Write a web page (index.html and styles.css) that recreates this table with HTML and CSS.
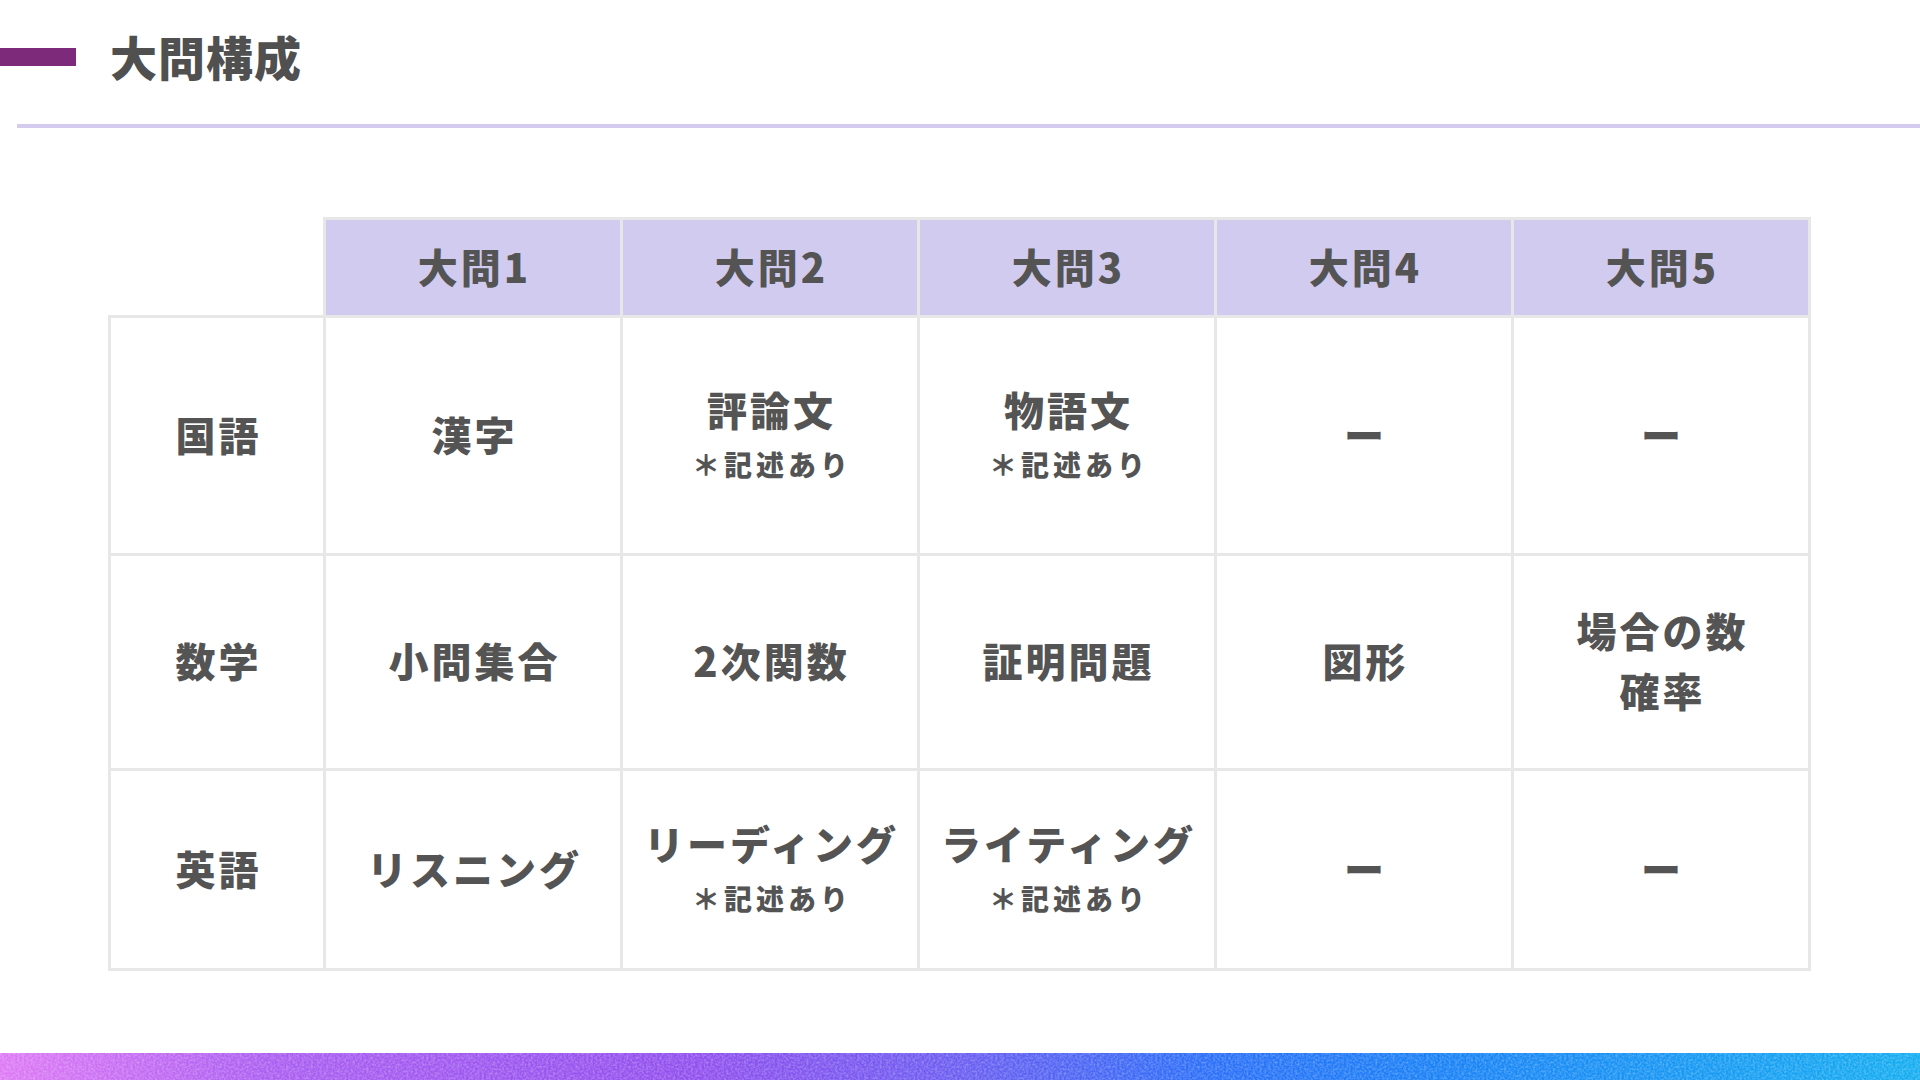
FILE: index.html
```html
<!DOCTYPE html>
<html lang="ja">
<head>
<meta charset="utf-8">
<title>大問構成</title>
<link rel="stylesheet" href="styles.css">
</head>
<body>
<div class="page">
  <header class="head">
    <div class="accent"></div>
    <h1 class="title">大問構成</h1>
  </header>
  <div class="rule"></div>

  <div class="grid">
    <div class="corner"></div>
    <div class="th"><span class="main">大問1</span></div>
    <div class="th"><span class="main">大問2</span></div>
    <div class="th"><span class="main">大問3</span></div>
    <div class="th"><span class="main">大問4</span></div>
    <div class="th"><span class="main">大問5</span></div>

    <div class="cell rh first"><span class="main">国語</span></div>
    <div class="cell first"><span class="main">漢字</span></div>
    <div class="cell first"><span class="main">評論文</span><span class="sub">＊記述あり</span></div>
    <div class="cell first"><span class="main">物語文</span><span class="sub">＊記述あり</span></div>
    <div class="cell first"><span class="main">ー</span></div>
    <div class="cell first"><span class="main">ー</span></div>

    <div class="cell rh"><span class="main">数学</span></div>
    <div class="cell"><span class="main">小問集合</span></div>
    <div class="cell"><span class="main">2次関数</span></div>
    <div class="cell"><span class="main">証明問題</span></div>
    <div class="cell"><span class="main">図形</span></div>
    <div class="cell"><span class="main">場合の数</span><span class="main">確率</span></div>

    <div class="cell rh"><span class="main">英語</span></div>
    <div class="cell"><span class="main">リスニング</span></div>
    <div class="cell"><span class="main">リーディング</span><span class="sub">＊記述あり</span></div>
    <div class="cell"><span class="main">ライティング</span><span class="sub">＊記述あり</span></div>
    <div class="cell"><span class="main">ー</span></div>
    <div class="cell"><span class="main">ー</span></div>
  </div>

  <div class="spacer"></div>
  <div class="band">
    <svg class="band-svg" viewBox="0 0 1920 27" preserveAspectRatio="none" xmlns="http://www.w3.org/2000/svg">
      <defs>
        <linearGradient id="g" x1="0" y1="0" x2="1" y2="0">
          <stop offset="0" stop-color="#de7af5"/>
          <stop offset="0.14" stop-color="#ab5ff1"/>
          <stop offset="0.36" stop-color="#9150ee"/>
          <stop offset="0.5" stop-color="#6c5ef1"/>
          <stop offset="0.63" stop-color="#2c70f8"/>
          <stop offset="0.75" stop-color="#1a82f6"/>
          <stop offset="1" stop-color="#16aef1"/>
        </linearGradient>
        <filter id="n" x="0" y="0" width="100%" height="100%">
          <feTurbulence type="fractalNoise" baseFrequency="0.45" numOctaves="2" seed="4" result="t"/>
          <feColorMatrix type="matrix" values="0 0 0 0 1  0 0 0 0 1  0 0 0 0 1  0 0 0 -1.6 1.05" in="t"/>
        </filter>
      </defs>
      <rect width="1920" height="27" fill="url(#g)"/>
      <rect width="1920" height="27" filter="url(#n)" opacity="0.35"/>
    </svg>
  </div>
</div>
</body>
</html>
```

FILE: styles.css
```css
html, body {
  margin: 0;
  padding: 0;
  background: #ffffff;
}

body {
  font-family: "Noto Sans CJK JP", "Noto Sans", sans-serif;
  color: #545454;
}

.page {
  width: 1920px;
  height: 1080px;
  display: flex;
  flex-direction: column;
  overflow: hidden;
}

.head {
  height: 110px;
  display: flex;
  align-items: center;
  gap: 34px;
}

.accent {
  width: 76px;
  height: 18px;
  margin-top: 4px;
  background: #7e2a7a;
}

.title {
  margin: 0;
  font-size: 47px;
  line-height: 1;
  font-weight: 900;
  letter-spacing: 1px;
  color: #505050;
}

.rule {
  margin: 14px 0 0 17px;
  height: 4px;
  background: #d3ccef;
}

.grid {
  margin: 89px 0 0 108px;
  display: grid;
  grid-template-columns: 218px repeat(5, 297px);
  grid-template-rows: 98px 241px 215px 200px;
}

.corner {
  box-sizing: border-box;
  border-right: 3px solid #e7e7e7;
}

.th,
.cell {
  box-sizing: border-box;
  display: flex;
  flex-direction: column;
  align-items: center;
  justify-content: center;
  text-align: center;
  border-right: 3px solid #e7e7e7;
  padding-bottom: 4px;
}

.th {
  background: #d1cbef;
  border-top: 3px solid #e7e7e7;
}

.cell {
  border-bottom: 3px solid #e7e7e7;
  background: #ffffff;
}

.cell.first {
  border-top: 3px solid #e7e7e7;
}

.cell.rh {
  border-left: 3px solid #e7e7e7;
}

.main {
  display: block;
  font-size: 40px;
  line-height: 60px;
  font-weight: 900;
  letter-spacing: 3px;
  margin-right: -3px;
  white-space: nowrap;
}

.sub {
  display: block;
  font-size: 28px;
  line-height: 50px;
  font-weight: 900;
  letter-spacing: 4px;
  margin-right: -4px;
  white-space: nowrap;
}

.spacer {
  flex: 1;
}

.band {
  height: 27px;
  line-height: 0;
}

.band-svg {
  display: block;
  width: 1920px;
  height: 27px;
}
```
